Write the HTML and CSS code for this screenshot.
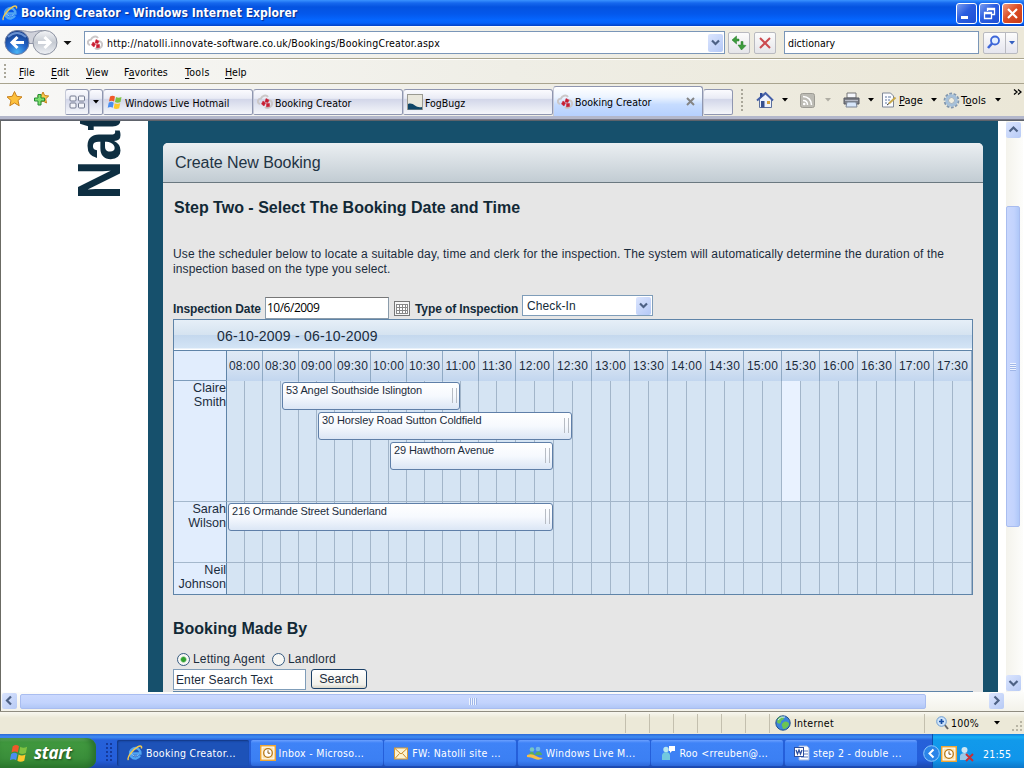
FILE: index.html
```html
<!DOCTYPE html>
<html lang="en">
<head>
    <meta charset="UTF-8">
    <meta name="viewport" content="width=device-width, initial-scale=1.0">
    <title>Booking Creator</title>
    <link rel="stylesheet" href="styles.css">
</head>
<body>
    <svg class="defs" width="0" height="0">
        <symbol id="ie" viewBox="0 0 16 16">
            <path d="M12.9 10.5A5.2 5.2 0 1 1 13.4 8.600H5" fill="none" stroke="#4fa4f2" stroke-width="2.500"/>
            <path d="M11.500 9.600A4.400 4.400 0 0 1 4 8" fill="none" stroke="#a5dcff" stroke-width="0.900"/>
            <path d="M1.500 15C-.5 13 5 5 10.500 2c3-1.600 4.800-1 3.800 1.500" fill="none" stroke="#f0c850" stroke-width="1.500"/>
        </symbol>
        <symbol id="site" viewBox="0 0 16 16">
            <path d="M3 10C0 9 0 5 4 4.500 5 2 9 0 11 3M12 6c4 1 4 5 1 7-2 1.500-4 1-5 0" fill="none" stroke="#cbc7c8" stroke-width="2"/>
            <path d="M9 4.500l3 1.500-1 2.500-3-.5zM6 7l2.500 2L7 12 4.500 10zM9.500 9.500l3 0 0 3-3 .5z" fill="#c81e32" stroke="#c81e32" stroke-width=".5"/>
        </symbol>
        <symbol id="flag" viewBox="0 0 16 16">
            <path d="M3 2.500c2-1.200 3.500-1 5 0L7 7.500c-1.500-1-3-1-5 0z" fill="#f0592a"/>
            <path d="M9 3c1.500 1 3.500 1 5.500 0l-1 5c-2 1-4 1-5.500 0z" fill="#7fc241"/>
            <path d="M1.700 8.700c2-1.200 3.500-1 5 0l-1 5c-1.500-1-3-1-5 0z" fill="#4a8df0"/>
            <path d="M7.700 9.200c1.500 1 3.500 1 5.500 0l-1 5c-2 1-4 1-5.500 0z" fill="#fcc82d"/>
        </symbol>
        <symbol id="outlook" viewBox="0 0 16 16">
            <rect x=".75" y=".75" width="14.500" height="14.500" fill="#fff" stroke="#eda532" stroke-width="1.500"/>
            <rect x="2.500" y="2.500" width="11" height="11" fill="#fbe3ae"/>
            <circle cx="8" cy="8" r="4.300" fill="#fff" stroke="#b87818" stroke-width="1.300"/>
            <path d="M8 5.300V8.200h2.200" fill="none" stroke="#8a5a10"/>
        </symbol>
    </svg>

    <div class="titlebar">
        <svg class="i16"><use href="#ie"/></svg>
        <span class="caption">Booking Creator - Windows Internet Explorer</span>
        <div class="window-buttons">
            <span class="wb"><svg width="19" height="19"><path d="M4 13.500h7" stroke="#fff" stroke-width="3"/></svg></span>
            <span class="wb"><svg width="19" height="19"><path d="M7.500 7V4.500h7v6H12M7 5.500h8M4.500 8.500h7v6h-7zM4 9.500h8" fill="none" stroke="#fff" stroke-width="1.300"/></svg></span>
            <span class="wb close"><svg width="19" height="19"><path d="M5 5l9 9M14 5l-9 9" stroke="#fff" stroke-width="2.200"/></svg></span>
        </div>
    </div>

    <div class="navbar">
        <svg class="travel" width="74" height="30">
            <defs>
                <radialGradient id="gb" cx=".5" cy=".9" r=".8"><stop offset="0" stop-color="#49b4f4"/><stop offset=".5" stop-color="#2467cb"/><stop offset="1" stop-color="#17418f"/></radialGradient>
                <linearGradient id="gf" x2="0" y2="1"><stop offset="0" stop-color="#f4f5f7"/><stop offset=".5" stop-color="#c5cad2"/><stop offset="1" stop-color="#f0f2f6"/></linearGradient>
            </defs>
            <path d="M17 2.500C26 2.500 28 4 31 4s6-1.500 14-1.500v13H17z" fill="#cfd1da" stroke="#9095a8"/>
            <circle cx="17" cy="14.500" r="12" fill="url(#gb)" stroke="#6d7da3"/>
            <circle cx="45" cy="14.500" r="12" fill="url(#gf)" stroke="#8d93a2"/>
            <path d="M8 9Q17 1 26 9" fill="none" stroke="#8db4ec" stroke-width="2" opacity=".7"/>
            <path d="M24 14.500H12M17.500 9L12 14.500l5.500 5.500" fill="none" stroke="#fff" stroke-width="3"/>
            <path d="M38 14.500h12M44.500 9l5.500 5.500-5.500 5.500" fill="none" stroke="#fff" stroke-width="3"/>
            <path d="M63.500 13h8l-4 4z" fill="#111"/>
        </svg>
        <div class="address">
            <svg class="i16"><use href="#site"/></svg>
            <span class="url">http://natolli.innovate-software.co.uk/Bookings/BookingCreator.aspx</span>
            <span class="drop"><svg width="15" height="17"><path d="M4 6.500l3.500 3.500L11 6.500" fill="none" stroke="#4d6185" stroke-width="2.200"/></svg></span>
        </div>
        <span class="nav-button"><svg width="20" height="20"><path d="M7.500 3L3 7l4.500 4V8H10V6H7.500zM12.500 17l4.500-4.500-3-.500V8.500h-2V12h-3z" fill="#3c9c3c" stroke="#277a2a" stroke-width=".5"/></svg></span>
        <span class="nav-button"><svg width="20" height="20"><path d="M5 5l10 10M15 5L5 15" stroke="#cb4a4f" stroke-width="2"/></svg></span>
        <div class="search">dictionary</div>
        <div class="search-go">
            <svg width="21" height="20"><circle cx="11" cy="7.500" r="4" fill="#e4f0ff" stroke="#3d66d8" stroke-width="1.800"/><path d="M8 10.500L4 15" stroke="#3d66d8" stroke-width="2.600"/></svg>
            <svg class="split" width="12" height="20"><path d="M3 8h6l-3 3.500z" fill="#3560c0"/></svg>
        </div>
    </div>

    <div class="menubar">
        <span class="grip"></span>
        <span class="m-file"><u>F</u>ile</span>
        <span class="m-edit"><u>E</u>dit</span>
        <span class="m-view"><u>V</u>iew</span>
        <span class="m-fav">F<u>a</u>vorites</span>
        <span class="m-tools"><u>T</u>ools</span>
        <span class="m-help"><u>H</u>elp</span>
    </div>

    <div class="tabbar">
        <svg class="stars" width="65" height="32">
            <path d="M14.500 7.500l2.200 4.800 5.300.6-4 3.600 1.200 5.200-4.700-2.700-4.700 2.700 1.200-5.200-4-3.600 5.300-.6z" fill="#fdc13c" stroke="#c9801c"/>
            <path d="M43 8l1.700 3.500 4 .5-3 2.800.8 4.200-3.500-2-3.500 2 .8-4.200-3-2.800 4-.5z" fill="#fbca4c" stroke="#c9801c"/>
            <path d="M38 10.500h3v3.500h3.500v3H41v4h-3v-4h-3.500v-3H38z" fill="#7fe070" stroke="#258c35"/>
        </svg>
        <div class="tab quick"><svg width="17" height="16" fill="#f4f5fa" stroke="#747b90"><rect x="1" y="2" width="6" height="5" rx="1"/><rect x="9.500" y="2" width="6" height="5" rx="1"/><rect x="1" y="9" width="6" height="5" rx="1"/><rect x="9.500" y="9" width="6" height="5" rx="1"/></svg></div>
        <div class="tab quick-arrow"><svg width="8" height="6"><path d="M1 1h6L4 4.500z"/></svg></div>
        <div class="tab"><svg class="i16"><use href="#flag"/></svg><span>Windows Live Hotmail</span></div>
        <div class="tab"><svg class="i16"><use href="#site"/></svg><span>Booking Creator</span></div>
        <div class="tab"><svg class="i16" viewBox="0 0 16 16"><rect x=".5" y=".5" width="15" height="15" fill="#e9e7dc" stroke="#9a9a92"/><path d="M1 10c3-1 5 0 7 1.500s4 2 7 1.500v2.500H1z" fill="#0f4566"/></svg><span>FogBugz</span></div>
        <div class="tab active"><svg class="i16"><use href="#site"/></svg><span>Booking Creator</span><svg class="tab-x" width="10" height="10"><path d="M1 1l7 7M8 1L1 8" stroke="#858585" stroke-width="2"/></svg></div>
        <div class="tab new"></div>
        <div class="commands">
            <span class="grip"></span>
            <svg class="home" width="18" height="18"><path d="M3.500 8v8.500h12V8L9.500 3z" fill="#eef2fb" stroke="#5b6f9d"/><path d="M1 9.500L9.500 2 17 9.500" fill="none" stroke="#4560a8" stroke-width="2"/><path d="M4 2h2.500v3L4 7z" fill="#2d4a98"/><rect x="5" y="10" width="3.500" height="6.500" fill="#36508e"/><rect x="11" y="10" width="3" height="3" fill="#d5a23d"/></svg>
            <svg class="arr" width="6" height="4"><path d="M0 0h6L3 3.500z"/></svg>
            <svg class="rss" width="15" height="15"><rect x=".5" y=".5" width="14" height="14" rx="2" fill="#bcbbb4" stroke="#9c9b94"/><path d="M3 3.500c5 0 8.500 3.500 8.500 8.500M3 7.500c3 0 4.500 1.500 4.500 4.500" fill="none" stroke="#fff" stroke-width="1.500"/><circle cx="4.200" cy="11" r="1.300" fill="#fff"/></svg>
            <svg class="arr off" width="6" height="4"><path d="M0 0h6L3 3.500z"/></svg>
            <svg class="printer" width="17" height="16"><path d="M4 1h9v5H4z" fill="#f5f7fc" stroke="#777"/><path d="M1 6h15v6H1z" fill="#7d8088" stroke="#585b62"/><path d="M2 8.500h13" stroke="#b8bcc8"/><path d="M4 10h9l1 5H3z" fill="#d7e6fa" stroke="#7d8696"/></svg>
            <svg class="arr" width="6" height="4"><path d="M0 0h6L3 3.500z"/></svg>
            <svg class="page-icon" width="16" height="16"><path d="M1.500 1h8l3 3v11h-11z" fill="#fbfcff" stroke="#7e8797"/><path d="M4 5h2M4 8h2M4 11h2M7 5h3M7 8h2" stroke="#5d769d"/><path d="M8 11.500l6.500-6" stroke="#c7a84b" stroke-width="2"/><path d="M6 13l2-1.500" stroke="#333"/></svg>
            <span class="c-page"><u>P</u>age</span>
            <svg class="arr" width="6" height="4"><path d="M0 0h6L3 3.500z"/></svg>
            <svg class="gear" width="17" height="17"><circle cx="8.500" cy="8.500" r="6.900" fill="none" stroke="#8297ae" stroke-width="2" stroke-dasharray="2.800 1.500"/><circle cx="8.500" cy="8.500" r="4.700" fill="none" stroke="#a5c0da" stroke-width="3"/><circle cx="8.500" cy="8.500" r="3" fill="#f1eedf" stroke="#7f97b1" stroke-width=".7"/></svg>
            <span class="c-tools">T<u>o</u>ols</span>
            <svg class="arr" width="6" height="4"><path d="M0 0h6L3 3.500z"/></svg>
            <svg class="more" width="9" height="7"><path d="M1 .5l3 2.500-3 2.500M5 .5l3 2.500-3 2.500" fill="none" stroke="#000" stroke-width="1.300"/></svg>
        </div>
    </div>

    <div class="viewport">
        <div class="page">
            <div class="brand"><span>Nat</span></div>
            <div class="frame">
                <div class="panel">
                    <div class="panel-title">Create New Booking</div>
                    <div class="panel-body">
                        <h2 class="step">Step Two - Select The Booking Date and Time</h2>
                        <p class="intro">Use the scheduler below to locate a suitable day, time and clerk for the inspection. The system will automatically determine the duration of the<br><span class="intro-end">inspection based on the type you select.</span></p>
                        <div class="form-row">
                            <label class="l-date">Inspection Date</label>
                            <div class="date-input">10/6/2009</div>
                            <svg class="calendar" width="16" height="15"><rect x=".5" y=".5" width="15" height="14" fill="#f6f6f6" stroke="#777"/><rect x="2.500" y="3.500" width="11" height="9" fill="#fff" stroke="#888"/><path d="M5.500 3v10M8.500 3v10M11.500 3v10M2 6.500h12M2 9.500h12" stroke="#888"/></svg>
                            <label class="l-type">Type of Inspection</label>
                            <div class="select"><span>Check-In</span><span class="drop"><svg width="15" height="17"><path d="M4 6.500l3.500 3.500L11 6.500" fill="none" stroke="#4d6185" stroke-width="2.200"/></svg></span></div>
                        </div>
                        <div class="scheduler">
                            <div class="range"><span>06-10-2009 - 06-10-2009</span></div>
                            <div class="times">
                                <div class="clerk"></div>
                                <div class="time-grid" id="timeHeader"></div>
                            </div>
                            <div id="clerkRows"></div>
                        </div>
                        <h2 class="made-by">Booking Made By</h2>
                        <div class="radios">
                            <span class="radio on"></span><label class="l-agent">Letting Agent</label>
                            <span class="radio"></span><label class="l-landlord">Landlord</label>
                        </div>
                        <div class="search-row">
                            <div class="search-text">Enter Search Text</div>
                            <div class="search-button">Search</div>
                        </div>
                        <div class="results"></div>
                    </div>
                </div>
            </div>
        </div>
        <div class="vscroll">
            <span class="sb"><svg width="15" height="16"><path d="M3.500 9.500l4-4 4 4" fill="none" stroke="#4d6185" stroke-width="2.200"/></svg></span>
            <div class="vthumb"><i></i></div>
            <span class="sb"><svg width="15" height="16"><path d="M3.500 6l4 4 4-4" fill="none" stroke="#4d6185" stroke-width="2.200"/></svg></span>
        </div>
    </div>
    <div class="hscroll">
        <span class="sb"><svg width="15" height="15"><path d="M9 3.500l-4 4 4 4" fill="none" stroke="#4d6185" stroke-width="2.200"/></svg></span>
        <div class="hthumb"><i></i></div>
        <span class="sb"><svg width="15" height="15"><path d="M5.500 3.500l4 4-4 4" fill="none" stroke="#4d6185" stroke-width="2.200"/></svg></span>
    </div>

    <div class="statusbar">
        <span class="pane main"></span><span class="pane"></span><span class="pane"></span><span class="pane"></span><span class="pane"></span><span class="pane"></span><span class="pane"></span>
        <div class="zone">
            <svg class="i16" viewBox="0 0 16 16"><circle cx="8" cy="8" r="7.200" fill="#3c84dc" stroke="#21518c"/><path d="M3 3c3-2 6-2 6 0S6 5 6 7s-3 2-4 0zM9 7c2-1 5 0 5 2s-3 5-5 5-1-2-2-3 0-3 2-4z" fill="#6cc452"/><path d="M3 5q3-4 7-3" fill="none" stroke="#cfe8ff"/></svg>
            <span>Internet</span>
        </div>
        <div class="zoom">
            <svg width="13" height="14"><path d="M8 8l4 5" stroke="#666" stroke-width="2"/><circle cx="5.500" cy="5.500" r="4.800" fill="#cfe4fa" stroke="#6b9bd0"/><path d="M5.500 3v5M3 5.500h5" stroke="#174fa5" stroke-width="1.700"/></svg>
            <span>100%</span>
            <svg class="arr" width="6" height="4"><path d="M0 0h6L3 3.500z"/></svg>
        </div>
        <svg class="resize" width="13" height="13" fill="#b8b5a5"><path d="M9 0h2v2H9zM5 4h2v2H5zM9 4h2v2H9zM1 8h2v2H1zM5 8h2v2H5zM9 8h2v2H9z"/></svg>
    </div>

    <div class="taskbar">
        <div class="start"><svg width="20" height="20"><use href="#flag"/></svg><span>start</span></div>
        <div class="handle"></div>
        <div class="tasks">
            <div class="task pressed"><svg class="i16"><use href="#ie"/></svg><span>Booking Creator...</span></div>
            <div class="task"><svg class="i16"><use href="#outlook"/></svg><span>Inbox - Microso...</span></div>
            <div class="task"><svg class="i16" viewBox="0 0 16 16"><rect x="1.500" y="3" width="13" height="11" fill="#fdf3d0" stroke="#d89b35"/><path d="M2 3.500l6 5.500 6-5.500M2 13.500l4.500-5M14 13.500l-4.500-5" fill="none" stroke="#c98a2a"/></svg><span>FW: Natolli site ...</span></div>
            <div class="task"><svg class="i16" viewBox="0 0 16 16"><circle cx="5" cy="4.500" r="2.300" fill="#77c6c0"/><circle cx="11" cy="4" r="2.300" fill="#71b8e8"/><path d="M2 10q1-4 4-3l2 3zM8 10q1-4 4-3.500 3 1 3 3.500z" fill="#56ad65"/><path d="M0 10q5-2 9 1 3 2 7 2-4 3-8 1t-8-2z" fill="#f7bd48"/></svg><span>Windows Live M...</span></div>
            <div class="task"><svg class="i16" viewBox="0 0 16 16"><circle cx="6" cy="4.500" r="2.700" fill="#b8e7f1"/><path d="M2 15V10q1-3 4-3t4 3v5z" fill="#72c8df"/><path d="M9 1h6v5h-3l-2 2V6H9z" fill="#fff"/></svg><span>Roo &lt;rreuben@...</span></div>
            <div class="task"><svg class="i16" viewBox="0 0 16 16"><path d="M5 1h8l2 2v12H5z" fill="#fff" stroke="#9bb3df"/><path d="M10 6h4M10 9h4M7 12h7" stroke="#5c7ac0"/><rect x=".5" y="2.500" width="9" height="9" fill="#fff" stroke="#2d4f9f"/><path d="M2 5l1.500 4L5 5l1.500 4L8 5" fill="none" stroke="#2d4f9f" stroke-width="1.300"/></svg><span>step 2 - double ...</span></div>
        </div>
        <div class="tray">
            <svg class="collapse" width="17" height="17"><circle cx="8.500" cy="8.500" r="7.800" fill="#2a84e8" stroke="#8dc8fb"/><path d="M10.500 4.500l-4 4 4 4" fill="none" stroke="#fff" stroke-width="2"/></svg>
            <svg class="i16"><use href="#outlook"/></svg>
            <svg class="user" width="16" height="16"><circle cx="5.500" cy="4" r="3" fill="#cde7f4"/><path d="M1 14V9.500Q2 7 5.500 7T10 9.500V14z" fill="#9cc9e6"/><path d="M7 8l7 7M14 8l-7 7" stroke="#c62f37" stroke-width="2"/></svg>
            <span class="clock">21:55</span>
        </div>
    </div>

    <script>
        // the first seven half hours are 36px wide, the later ones 38px, two slots in each
        const clerks = [
            { name: 'Claire<br>Smith', size: 'tall', bookings: [
                { text: '53 Angel Southside Islington', start: 3, end: 13 },
                { text: '30 Horsley Road Sutton Coldfield', start: 5, end: 19 },
                { text: '29 Hawthorn Avenue', start: 9, end: 18 }
            ], current: 30 },
            { name: 'Sarah<br>Wilson', size: 'mid', bookings: [
                { text: '216 Ormande Street Sunderland', start: 0, end: 18 }
            ] },
            { name: 'Neil<br>Johnson', size: 'low', bookings: [] }
        ];

        let header = '';
        for (let i = 0; i < 20; i++) {
            let hour = String(8 + Math.floor(i / 2)).padStart(2, '0');
            header += `<div class="time">${hour}:${i % 2 ? '30' : '00'}</div>`;
        }
        document.getElementById('timeHeader').innerHTML = header;

        document.getElementById('clerkRows').innerHTML = clerks.map(clerk => {
            let slots = '';
            for (let i = 0; i < 40; i++) {
                slots += `<div class="slot${i === clerk.current ? ' current' : ''}"></div>`;
            }
            let bookings = clerk.bookings.map((b, i) =>
                `<div class="booking" style="grid-area: ${i + 1} / ${b.start + 1} / auto / ${b.end + 1}">${b.text}</div>`
            ).join('');
            return `<div class="row ${clerk.size}">
                <div class="clerk">${clerk.name}</div>
                <div class="slots"><div class="slot-grid">${slots}</div><div class="bookings">${bookings}</div></div>
            </div>`;
        }).join('');
    </script>
</body>
</html>
```
FILE: styles.css
```css
* { box-sizing: border-box; }
body { margin: 0; width: 1024px; height: 768px; overflow: hidden; background: #ece9d8; font-family: "DejaVu Sans Condensed", "DejaVu Sans", sans-serif; font-stretch: condensed; font-size: 10.5px; color: #000; display: flex; flex-direction: column; white-space: nowrap; }
body > div { flex: none; }
svg { display: block; flex: none; }
.defs { position: absolute; }
.i16 { width: 16px; height: 16px; }
.grip { width: 2px; height: 16px; background: repeating-linear-gradient(#aaa79a 0 2px, transparent 2px 4px); }

.titlebar { height: 26px; display: flex; align-items: center; padding: 0 2px 0 2px; background: linear-gradient(#3a93ff 0, #1668ee 3px, #0453e0 7px, #0458ec 14px, #0566ff 20px, #0562fa 23px, #0241c4 26px); color: #fff; }
.titlebar .caption { margin-left: 3px; font-weight: bold; font-size: 12px; letter-spacing: .05px; text-shadow: 1px 1px 1px #0a2c8a; }
.window-buttons { display: flex; gap: 2px; margin-left: auto; margin-right: -1px; }
.wb { width: 21px; height: 21px; border: 1px solid #fff; border-radius: 3px; background: linear-gradient(135deg, #7b9df0, #2a5de0 45%, #1f4fd4); }
.wb.close { background: linear-gradient(135deg, #f09a80, #dd4e26 45%, #c73a14); }

.navbar { height: 33px; display: flex; align-items: center; background: linear-gradient(90deg, #f8f8f7, #efeee6 50%, #ece8d9); border-bottom: 1px solid #a9a48f; border-top: 1px solid #fbfbfb; }
.address { margin-left: 10px; width: 641px; height: 23px; border: 1px solid #7a96b8; background: #fff; display: flex; align-items: center; padding: 0 1px 0 2px; }
.url { margin-left: 4px; letter-spacing: .17px; }
.drop { margin-left: auto; width: 15px; height: 18px; border-radius: 2px; background: linear-gradient(135deg, #dbe5fe, #b4c8f6); }
.nav-button { margin-left: 3px; width: 22px; height: 22px; border: 1px solid #b9bac0; border-radius: 2px; background: linear-gradient(#fcfcfc, #e5e5e9); }
.nav-button + .nav-button { margin-left: 4px; }
.search { margin-left: 8px; width: 195px; height: 23px; border: 1px solid #7a96b8; background: #fff; padding-left: 3px; line-height: 22px; }
.search-go { margin-left: 4px; display: flex; height: 22px; width: 35px; border: 1px solid #b9bac0; border-radius: 2px; background: linear-gradient(#fcfcfc, #e5e5ee); }
.split { border-left: 1px solid #b9bac0; }

.menubar { height: 25px; display: flex; align-items: center; padding-left: 4px; background: linear-gradient(90deg, #f8f8f7, #efeee6 50%, #ebe7d7); border-top: 1px solid #fff; border-bottom: 1px solid #a9a48f; }
.menubar u { text-underline-offset: 2px; }
.m-file { margin-left: 13px; width: 32px; }
.m-edit { width: 35px; }
.m-view { width: 38px; }
.m-fav { width: 61px; letter-spacing: .15px; }
.m-tools { width: 40px; letter-spacing: .3px; }

.tabbar { height: 36px; display: flex; align-items: flex-start; padding-top: 5px; background: linear-gradient(90deg, #f8f8f7, #efeee6 50%, #ebe7d7) 0 0 / 100% 32px no-repeat, #b3b7cb; border-bottom: 1px solid #777787; }
.stars { margin-top: -5px; }
.tab { height: 26px; width: 150px; border: 1px solid #8f96b0; border-left-color: #c6cad8; border-radius: 3px 3px 2px 2px; display: flex; align-items: center; padding-left: 3px; background: linear-gradient(#fbfbfe, #e9ebf5 35%, #d2d6e9 38%, #e4e7f2 70%, #f5f6fa); }
.tab span { margin: 1px 0 0 2px; }
.tab.quick { width: 24px; }
.tab.quick-arrow { width: 14px; padding-left: 2px; }
.tab.active { height: 30px; margin-top: -3px; border-bottom: 0; border-radius: 3px 3px 0 0; background: linear-gradient(#fff, #ecf4ff 35%, #c6dcff 60%, #b6d0ff); }
.tab-x { margin-left: auto; margin-right: 6px; }
.tab.new { width: 30px; }
.commands { flex: 1; height: 26px; display: flex; align-items: center; margin-top: -2px; }
.commands .grip { margin-left: 8px; height: 22px; }
.home { margin-left: 13px; }
.arr { margin-left: 8px; }
.off { opacity: .25; margin-left: 10px; }
.rss { margin-left: 12px; }
.printer { margin-left: 12px; }
.page-icon { margin-left: 7px; }
.c-page { margin-left: 2px; width: 24px; font-size: 11px; }
.gear { margin-left: 6px; }
.c-tools { margin-left: 1px; width: 26px; font-size: 11px; letter-spacing: .2px; }
.more { margin: -15px 0 0 12px; }

.viewport { height: 572px; display: flex; background: #fff; border-top: 1px solid #5e636b; border-left: 1px solid #6b6b64; font-family: "Liberation Sans", Arial, sans-serif; font-stretch: normal; font-size: 12px; color: #1b2c3c; }
.page { width: 1005px; height: 571px; display: flex; overflow: hidden; }
.brand { width: 147px; height: 84px; display: flex; justify-content: flex-end; align-items: flex-end; }
.brand span { writing-mode: vertical-rl; transform: rotate(180deg) scaleY(.88); font-size: 61px; font-weight: bold; line-height: 56px; margin-right: 21px; color: #0e2f42; }
.frame { width: 850px; padding: 22px 15px 0; background: #16506c; }
.panel { height: 549px; border-radius: 5px 5px 0 0; background: #e6e6e6; overflow: hidden; }
.panel-title { height: 40px; line-height: 39px; padding-left: 12px; font-size: 16px; letter-spacing: -.07px; color: #1f3444; background: linear-gradient(#ebeff2, #c2ccd3); border-bottom: 1px solid #6a7880; }
.panel-body { padding: 0 10px; }
h2 { margin: 0; font-size: 16px; line-height: 20px; color: #122936; }
.step { padding: 15px 0 0 1px; }
.intro { margin: 29px 0 0; line-height: 15px; letter-spacing: .137px; }
.intro-end { letter-spacing: .1px; }
.form-row { display: flex; align-items: center; height: 24px; margin-top: 18px; font-weight: bold; color: #142b3a; letter-spacing: -.1px; }
.form-row label { padding-top: 3px; }
.l-date { width: 92px; }
.date-input { width: 124px; height: 22px; border: 1px solid #8b9cab; border-top-color: #777; background: #fff; font: 12px/20px "Open Sans", sans-serif; padding-left: 1px; letter-spacing: -.5px; color: #000; margin-top: 2px; }
.calendar { margin: 3px 5px 0; }
.l-type { width: 107px; }
.select { width: 131px; height: 21px; border: 1px solid #7f9db9; background: #fff; display: flex; align-items: center; padding: 0 1px 0 4px; font-weight: normal; letter-spacing: .1px; margin-top: -3px; }

.scheduler { border: 1px solid #5f84a8; height: 276px; background: #5f84a8; }
.range { height: 31px; border-bottom: 1px solid #5f84a8; line-height: 33px; padding-left: 43px; font-size: 14px; letter-spacing: .22px; background: linear-gradient(#e6eff8 0, #d5e3f0 15px, #c4d8ee 15px, #d3e4f5 28px, #fff 29px); }
.times { display: flex; height: 30px; border-bottom: 1px solid #7d9cbb; }
.clerk { width: 53px; flex: none; border-right: 1px solid #5f84a8; background: #e1edfd; text-align: right; font-size: 12.6px; line-height: 14px; }
.time-grid { display: grid; grid-template-columns: repeat(7, 36px) 37px repeat(12, 38px); }
.time { border-right: 1px solid #8fa9c4; line-height: 30px; text-align: center; font-size: 12px; letter-spacing: .2px; background: linear-gradient(#dfe9f5, #d5e2f2 50%, #c2d6ef); }
.row { display: flex; }
.row .clerk { border-bottom: 1px solid #a4b8cc; }
.tall { height: 121px; }
.mid { height: 61px; }
.low { height: 31px; }
.slots { position: relative; }
.slot-grid, .bookings { display: grid; grid-template-columns: repeat(15, 18px) repeat(25, 19px); }
.slot-grid { height: 100%; }
.slot { background: #d5e4f3; border-right: 1px solid #a2b5c9; border-bottom: 1px solid #a2b5c9; }
.slot.current { background: #e9f2ff; }
.low .slot, .low .clerk { border-bottom: 0; }
.bookings { position: absolute; top: 0; left: 0; grid-auto-rows: 30px; }
.booking { position: relative; margin: 1px; border: 1px solid #5f7fa8; border-radius: 3px; background: linear-gradient(#fff 0, #f6f9fe 50%, #dbe6f5); font-size: 11px; line-height: 15px; letter-spacing: -.1px; padding-left: 3px; }
.booking::after { content: ""; position: absolute; right: 2px; top: 5px; width: 3px; height: 15px; border: solid #b7bcc4; border-width: 0 1px; }
.mid .booking { letter-spacing: -.15px; }

.made-by { margin-top: 24px; }
.radios { display: flex; align-items: center; height: 16px; margin: 12px 0 0 4px; letter-spacing: .15px; }
.radio { width: 13px; height: 13px; border: 1px solid #355a80; border-radius: 50%; background: #f7f7f4; }
.radio.on { background: radial-gradient(#2fa12f 0 2px, #f7f7f4 3.500px); }
.l-agent { margin-left: 3px; width: 79px; }
.l-landlord { margin-left: 3px; }
.search-row { display: flex; margin-top: 2px; gap: 5px; }
.search-text { width: 133px; height: 21px; border: 1px solid #7f9db9; background: #fff; line-height: 20px; padding-left: 2px; letter-spacing: .1px; }
.search-button { width: 56px; height: 20px; border: 1px solid #1b4067; border-radius: 3px; background: linear-gradient(#fff, #f1f0ea 80%, #d9d5c8); text-align: center; line-height: 18px; font-size: 12.500px; }
.results { border-top: 1px solid #5f84a8; margin-top: 1px; height: 20px; }

.sb { width: 15px; height: 16px; border-radius: 2px; background: linear-gradient(135deg, #dbe5fe, #b7caf5); flex: none; }
.vscroll { width: 17px; background: linear-gradient(90deg, #f4f3ec, #fdfdfb); padding: 1px 1px 0 0; display: flex; flex-direction: column; }
.vthumb { width: 14px; height: 321px; margin: 68px 0 148px; border: 1px solid #a9bdf0; border-radius: 2px; background: linear-gradient(90deg, #c9d7fd, #c2d3fd 60%, #afc8f8); display: flex; align-items: center; justify-content: center; }
.vthumb i { width: 6px; height: 8px; background: repeating-linear-gradient(#eef4ff 0 1px, #9fb6e8 1px 2px); }
.hscroll { height: 19px; border-left: 1px solid #6b6b64; display: flex; align-items: center; padding: 0 20px 1px 1px; background: linear-gradient(#fdfdfb, #f3f2ea); }
.hthumb { width: 906px; height: 15px; margin: 0 63px 0 3px; border: 1px solid #a9bdf0; border-radius: 2px; background: linear-gradient(#cbd9fe, #c2d3fd 60%, #b1c7f6); display: flex; align-items: center; justify-content: center; }
.hthumb i { width: 8px; height: 7px; background: repeating-linear-gradient(90deg, #eef4ff 0 1px, #9fb6e8 1px 2px); }

.statusbar { height: 23px; border-top: 1px solid #8f8c80; display: flex; align-items: center; background: linear-gradient(#f8f7f0, #ece9d8 6px); }
.pane { flex: none; width: 24px; height: 19px; border-right: 1px solid #c3bfae; }
.pane.main { width: 626px; }
.zone { display: flex; align-items: center; width: 149px; margin-left: 5px; gap: 3px; letter-spacing: .3px; }
.zoom { display: flex; align-items: center; height: 19px; border-left: 1px solid #c3bfae; padding-left: 11px; gap: 2px; letter-spacing: .2px; }
.zoom .arr { margin-left: 13px; }
.resize { margin: 8px 0 0 auto; }

.taskbar { height: 34px; display: flex; background: linear-gradient(#2b69d6 0, #3f8cf3 3px, #2661d9 6px, #245edb 26px, #1b47ab 34px); color: #fff; }
.start { width: 96px; margin-top: 4px; height: 30px; border-radius: 0 9px 9px 0; background: linear-gradient(#6db66b 0, #41993f 4px, #3a8e3a 20px, #2c7a2d); display: flex; align-items: center; padding-left: 9px; box-shadow: inset -4px 0 6px #286f2c; }
.start span { margin-left: 5px; font: italic bold 17px/24px "Open Sans", sans-serif; letter-spacing: -.3px; text-shadow: 1px 1px 2px #1d4c1d; }
.handle { width: 7px; margin: 8px 5px 6px 9px; background: radial-gradient(circle, #153a9c 1px, transparent 1.300px) 0 0 / 4px 4px; }
.tasks { display: flex; gap: 1.6px; margin-top: 6px; letter-spacing: .3px; }
.task { width: 132px; height: 26px; border-radius: 2px; background: linear-gradient(#6ba0ff 0, #3f83f7 3px, #3b7ff3 21px, #2d67d8); display: flex; align-items: center; padding-left: 9px; }
.task span { margin-left: 3px; }
.task.pressed { padding-left: 10px; background: #1d52b8; box-shadow: inset 1px 1px 2px #123680; }
.tray { margin-left: auto; width: 92px; background: linear-gradient(#0f80de 0, #18b0f4 3px, #119aeb 6px, #1095ea 26px, #0d76c8); border-left: 1px solid #0d4fae; display: flex; align-items: center; padding-top: 5px; }
.collapse { margin: 0 1px 0 -10px; }
.user { margin-left: 2px; }
.clock { margin-left: 8px; letter-spacing: .2px; }
```
